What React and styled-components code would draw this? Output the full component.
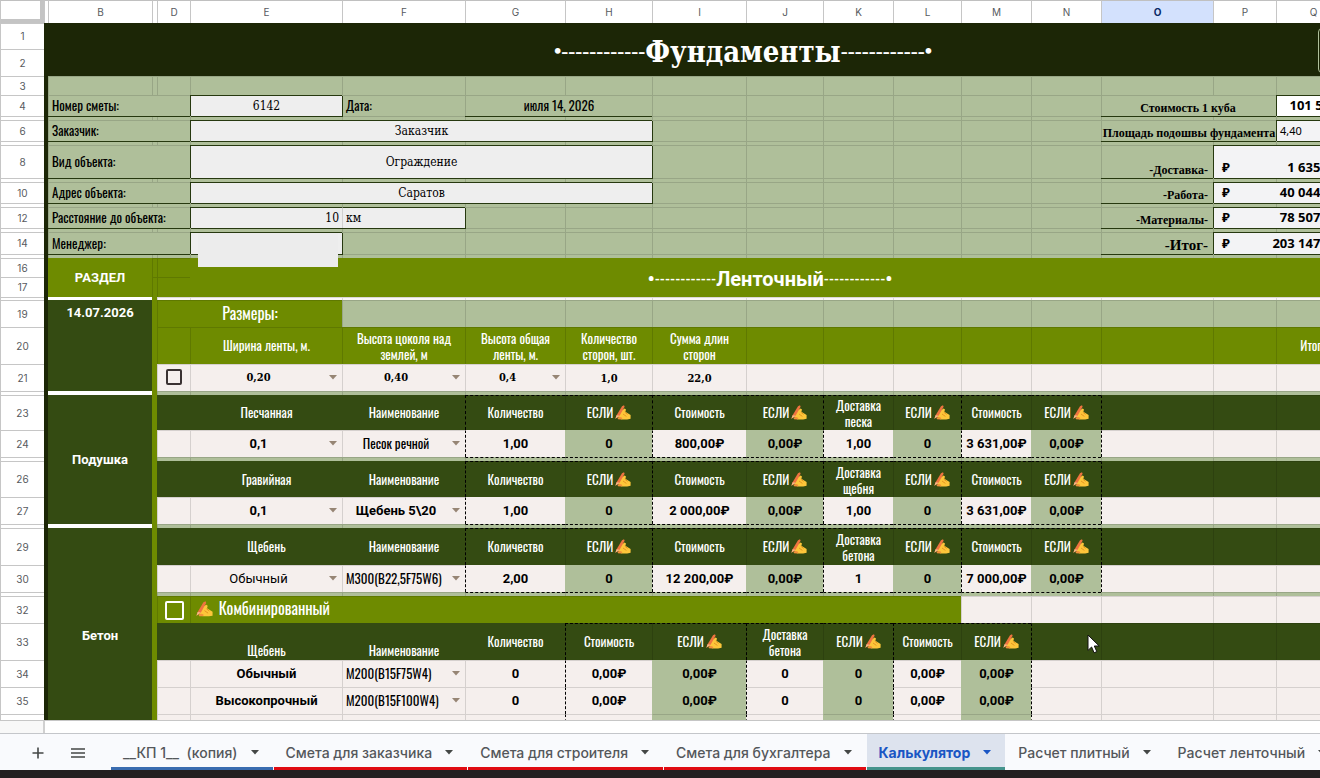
import React from 'react'
import styled, { createGlobalStyle, css } from 'styled-components'

const color = {
  night: '#1c2606',
  forest: '#344b12',
  olive: '#6e8b00',
  sage: '#afbf9a',
  paper: '#f5efed',
  field: '#eeeeee',
  line: 'rgba(0, 0, 0, 0.13)',
}

const narrow = '"Oswald", "Liberation Sans Narrow", "Arial Narrow", "Open Sans Condensed", "Liberation Sans", sans-serif'
const slab = '"DejaVu Serif Condensed", "DejaVu Serif", serif'

const GlobalStyle = createGlobalStyle`
  * {
    box-sizing: border-box;
  }
  body {
    margin: 0;
    overflow: hidden;
    font-family: Roboto, sans-serif;
  }
  button, input, select {
    font: inherit;
    color: inherit;
    margin: 0;
  }
`

const Page = styled.div`
  display: flex;
  flex-direction: column;
  height: 100vh;
  background: #fff;
`

const Viewport = styled.main`
  flex: 1;
  min-height: 0;
  overflow: hidden;
`

const Sheet = styled.table`
  table-layout: fixed;
  width: 100%;
  border-collapse: separate;
  border-spacing: 0;
  font-size: 13px;
  line-height: 17px;
`

const HeadCell = styled.th`
  height: 23px;
  padding: 0 0 1px;
  border-top: 1px solid #c0c0c0;
  border-left: 1px solid #c6c6c6;
  background: ${p => (p.$active ? '#d3e1fd' : '#fff')};
  color: ${p => (p.$active ? '#0b2a66' : '#575a5e')};
  font: ${p => (p.$active ? 700 : 400)} 10px Inter, sans-serif;
  text-align: center;
`

const Corner = styled(HeadCell)`
  border-right: 4px solid #c4c4c4;
  border-bottom: 4px solid #c4c4c4;
`

const RowHead = styled.th`
  padding: 0 0 1px;
  border-top: 1px solid #c6c6c6;
  border-left: 1px solid #c6c6c6;
  background: #fff;
  color: #575a5e;
  font: 400 10px Inter, sans-serif;
  text-align: center;
`

const borders = {
  dash: '1px dashed #000',
  clear: '1px solid transparent',
}

// headings and form fields sit a little lower than plain values
const lowered = ['forest', 'olive', 'field', 'night']

const Cell = styled.td`
  padding: 0 ${p => p.$pad ?? 3}px ${p => (lowered.includes(p.$bg) ? 0 : 2)}px;
  background: ${p => color[p.$bg] || p.$bg || color.sage};
  border-top: ${p => borders[p.$top] || `1px solid ${color.line}`};
  border-left: ${p => borders[p.$left] || `1px solid ${color.line}`};
  text-align: ${p => p.$align || 'center'};
  vertical-align: ${p => p.$valign || 'middle'};
  white-space: nowrap;
  ${p => p.$under && css`
    position: relative;
    z-index: 1;
    box-shadow: 0 1px 0 #26380f;
  `}
  ${p => p.$box && css`
    position: relative;
    z-index: 1;
    border-top-color: #26380f;
    border-left-color: ${p.$joined ? '#d0d0d0' : '#26380f'};
    box-shadow: 1px 1px 0 #26380f;
  `}
`

const Solid = styled(Cell)`
  border-top-color: transparent;
  border-left-color: ${p => (p.$left ? '' : 'transparent')};
`

const Title = styled(Cell)`
  position: relative;
  padding-top: 4px;
  border: 0;
  color: #fff;
  font: 700 29px ${slab};
`

const TitleButton = styled.button`
  position: absolute;
  top: 5px;
  right: 0;
  width: 120px;
  height: 45px;
  border: 1px solid ${color.sage};
  border-radius: 4px;
  background: transparent;
`

const SectionTitle = styled(Cell)`
  border: 0;
  padding-top: 2px;
  color: #fff;
  font: 700 20px Roboto, sans-serif;
`

const Dashes = styled.span`
  font: 700 ${p => (p.$large ? '21px "Liberation Serif", serif' : '13px Roboto, sans-serif')};
  line-height: 0;
  vertical-align: ${p => (p.$large ? 4 : 2)}px;
`

const Side = styled(Cell)`
  border: 0;
  color: #fff;
  font-size: 13px;
  font-weight: 700;
  line-height: 26px;
`

const Label = styled.label`
  display: block;
  font: 400 13px ${narrow};
  line-height: 16px;
`

const Field = styled.input`
  display: block;
  width: 100%;
  height: 18px;
  padding: 0;
  border: 0;
  background: transparent;
  font: 400 12px ${slab};
  text-align: ${p => p.$align || 'center'};
`

const Redacted = styled.div`
  position: absolute;
  top: 0;
  left: 7px;
  width: 140px;
  height: 34px;
  background: #ececec;
`

const Caption = styled(Cell)`
  padding-bottom: 0;
  padding-right: ${p => p.$pad ?? 5}px;
  font: 700 13px "Liberation Serif", serif;
  font-size: ${p => (p.$large ? 15 : 12)}px;
  text-align: ${p => p.$align || 'right'};
  vertical-align: bottom;
`

const Money = styled.div`
  display: flex;
  justify-content: ${p => (p.$center ? 'center' : 'space-between')};
  padding: ${p => (p.$center ? 0 : '0 11px 0 8px')};
  font: 700 13px "Noto Sans", sans-serif;
  line-height: 17px;
`

const Area = styled.span`
  font: 400 11px "Noto Sans", sans-serif;
`

const Head = styled.span`
  display: inline-flex;
  align-items: center;
  gap: 2px;
  color: #fff;
  font: 400 ${p => (p.$large ? 16 : 13)}px ${narrow};
  line-height: 16px;
  white-space: pre-line;
`

const Value = styled.span`
  font-weight: 700;
`

const SlabValue = styled.span`
  font: 700 11px ${slab};
`

const Picker = styled.span`
  display: grid;
  align-items: center;

  & > * {
    grid-area: 1 / 1;
  }
`

const fonts = {
  bold: css`font: 700 13px Roboto, sans-serif;`,
  plain: css`font: 400 13px Roboto, sans-serif;`,
  slab: css`font: 700 11px ${slab};`,
  narrow: css`font: 400 13px ${narrow};`,
}

const Select = styled.select`
  width: 100%;
  height: 20px;
  padding: 0 ${p => (p.$start ? 0 : 16)}px 0 0;
  border: 0;
  appearance: none;
  background: transparent;
  color: #000;
  ${p => fonts[p.$font]}
  text-align: ${p => (p.$start ? 'left' : 'center')};
  text-align-last: ${p => (p.$start ? 'left' : 'center')};
`

const Arrow = styled.svg`
  justify-self: end;
  margin-right: 2px;
  pointer-events: none;
`

const Tick = styled.input`
  display: block;
  width: ${p => (p.$light ? 19 : 16)}px;
  height: ${p => (p.$light ? 19 : 16)}px;
  margin: 0 auto;
  border: 2px solid ${p => (p.$light ? '#fff' : '#3a3232')};
  border-radius: 2px;
  appearance: none;
  background: transparent;
`

const ScrollStrip = styled.div`
  display: flex;
  height: 13px;
  border-top: 1px solid #c6c6c6;
`

const ScrollCorner = styled.div`
  width: 45px;
  border-right: 2px solid #d0d0d0;
  background: #f8f8f8;
`

const TabBar = styled.nav`
  display: flex;
  height: 37px;
  padding-left: 18px;
  border-top: 1px solid #c4c6ca;
  background: #f9fafd;
  overflow: hidden;
`

const IconButton = styled.button`
  display: flex;
  flex: none;
  align-items: center;
  justify-content: center;
  width: 40px;
  padding: 2px 0 0;
  border: 0;
  background: transparent;
  color: #444746;
`

const Tabs = styled.div`
  display: flex;
  gap: 1px;
  margin-left: 13px;
`

const Tab = styled.button`
  display: flex;
  flex: none;
  align-items: center;
  gap: 13px;
  padding: 4px 12px 0;
  border: 0;
  border-bottom: 3px solid ${p => p.$stripe || 'transparent'};
  background: ${p => (p.$active ? '#dde3ee' : 'transparent')};
  color: ${p => (p.$active ? '#1a56c4' : '#54575b')};
  font: ${p => (p.$active ? 700 : 500)} 14px Inter, sans-serif;
  white-space: pre;
`

const Taskbar = styled.div`
  height: 8px;
  background: #242021;
`

const PointerCell = styled(Solid)`
  position: relative;
`

const Pointer = styled.svg`
  position: absolute;
  top: 10px;
  left: 55px;
`

const columns = [
  ['', 44], ['', 4], ['B', 104], ['', 5], ['D', 33], ['E', 152], ['F', 123], ['G', 100],
  ['H', 87], ['I', 94], ['J', 77], ['K', 70], ['L', 68], ['M', 70], ['N', 70], ['O', 112],
  ['P', 63], ['Q', 74], ['R', 88],
]

const tabs = [
  { name: '__КП 1__  (копия)', stripe: '#3a6cb0' },
  { name: 'Смета для заказчика', stripe: '#e00b12' },
  { name: 'Смета для строителя', stripe: '#e00b12' },
  { name: 'Смета для бухгалтера', stripe: '#e00b12' },
  { name: 'Калькулятор', stripe: '#45938c', active: true },
  { name: 'Расчет плитный' },
  { name: 'Расчет ленточный' },
]

function Caret({ fill }) {
  return (
    <Arrow width="8" height="5" viewBox="0 0 8 5" aria-hidden="true">
      <path d="M0 0h8L4 4.5z" fill={fill || '#968574'} />
    </Arrow>
  )
}

function Hand({ size = 16 }) {
  return (
    <svg width={size} height={size} viewBox="0 0 16 16" aria-hidden="true">
      <path d="M3 12.5 4.5 9 7 6.2 9.6 4.4 11 5.4l-.6 2.4L15.6 11v3.8l-3.4.6H6.4z" fill="#fdc63a" />
      <path d="M9.8 8.2 12.6 10.4M8 10l3.4 2.4" stroke="#e08a1c" strokeWidth=".8" fill="none" />
      <path d="M.4 14.8 1.6 11.2 7 2.2 9 1.2l.6 1.6L4.6 11.8z" fill="#ef7440" />
      <path d="M.4 14.8 1.6 11.2l3 .6z" fill="#f6b98a" />
      <path d="M2.4 13.6c2-1 3.8-.6 5 .6l-1 1.2-3.4-.2z" fill="#f2913a" />
    </svg>
  )
}

function If() {
  return <Head>ЕСЛИ<Hand /></Head>
}

function Choice({ label, value, font = 'bold', start }) {
  return (
    <Picker>
      <Select aria-label={label} $font={font} $start={start} defaultValue={value}>
        <option>{value}</option>
      </Select>
      <Caret />
    </Picker>
  )
}

function Row({ n, h, children }) {
  return (
    <tr style={{ height: h }}>
      <RowHead scope="row">{n}</RowHead>
      <Solid $bg="night" $pad={0} />
      {children}
    </tr>
  )
}

function Blank({ count = 1, ...rest }) {
  return Array.from({ length: count }, (_, i) => <Cell key={i} $pad={0} {...rest} />)
}

// thin row between two blocks of the estimate
function Gap({ side, dashed, bg = 'sage', h = 4 }) {
  return (
    <Row h={h}>
      {side && <Side $bg="#fff" $pad={0} />}
      <Solid $bg="olive" $pad={0} />
      <Blank count={3} $bg={bg} />
      <Blank count={8} $bg={bg} $top={dashed && 'dash'} />
      <Blank count={4} $bg={bg} />
    </Row>
  )
}

function HeaderGap() {
  return <Row h={4}><Blank count={17} /></Row>
}

function SummaryRow({ n, h, label, total, name, large, children }) {
  return (
    <Row n={n} h={h}>
      <Cell colSpan={3} $align="left" $under><Label htmlFor={`f${n}`}>{label}</Label></Cell>
      {children}
      <Caption $under $large={large}>{name}</Caption>
      <Cell colSpan={2} $pad={0} $box $bg="#f3f3f5" $valign="bottom"><Money><span>₽</span><span>{total}</span></Money></Cell>
      <Blank />
    </Row>
  )
}

function BlockHead({ n, h, title, delivery, side }) {
  const items = ['Количество', null, 'Стоимость', null, `Доставка\n${delivery}`, null, 'Стоимость', null]
  return (
    <Row n={n} h={h}>
      {side}
      <Solid $bg="olive" $pad={0} />
      <Solid $bg="forest" />
      <Solid $bg="forest"><Head>{title}</Head></Solid>
      <Solid $bg="forest"><Head>Наименование</Head></Solid>
      {items.map((item, i) => (
        <Cell key={i} $bg="forest" $top="dash" $left={i % 2 ? null : 'dash'}>
          {item ? <Head>{item}</Head> : <If />}
        </Cell>
      ))}
      <Solid $bg="forest" $left="dash" />
      <Blank count={3} $bg="forest" />
    </Row>
  )
}

function BlockValues({ n, size, sizeFont, name, nameFont, nameStart, values }) {
  return (
    <Row n={n} h={27}>
      <Solid $bg="olive" $pad={0} />
      <Cell $bg="paper" />
      <Cell $bg="paper"><Choice label="Толщина" value={size} font={sizeFont} /></Cell>
      <Cell $bg="paper"><Choice label="Наименование" value={name} font={nameFont} start={nameStart} /></Cell>
      {values.map((v, i) => (
        <Cell key={i} $pad={0} $bg={i % 2 ? 'sage' : 'paper'} $top="clear" $left={i % 2 ? 'clear' : 'dash'}>
          <Value>{v}</Value>
        </Cell>
      ))}
      <Cell $bg="paper" $left="dash" />
      <Blank count={3} $bg="paper" />
    </Row>
  )
}

function MixedValues({ n, kind, mark }) {
  const values = ['0,00₽', '0,00₽', '0', '0', '0,00₽', '0,00₽']
  return (
    <Row n={n} h={27}>
      <Solid $bg="olive" $pad={0} />
      <Cell $bg="paper" />
      <Cell $bg="paper"><Value>{kind}</Value></Cell>
      <Cell $bg="paper"><Choice label="Наименование" value={mark} font="narrow" start /></Cell>
      <Cell $bg="paper"><Value>0</Value></Cell>
      {values.map((v, i) => (
        <Cell key={i} $bg={i % 2 ? 'sage' : 'paper'} $top={i % 2 ? 'clear' : null} $left={i % 2 ? 'clear' : 'dash'}>
          <Value>{v}</Value>
        </Cell>
      ))}
      <Cell $bg="paper" $left="dash" />
      <Blank count={4} $bg="paper" />
    </Row>
  )
}

function EstimateHeader() {
  return (
    <>
      <Row n={1} h={26}>
        <Title colSpan={17} rowSpan={2} $bg="night">
          <Dashes $large>•------------</Dashes>Фундаменты<Dashes $large>------------•</Dashes>
          <TitleButton type="button" aria-label="Обновить" />
        </Title>
      </Row>
      <Row n={2} h={27} />
      <Row n={3} h={19}><Blank count={17} /></Row>
      <Row n={4} h={21}>
        <Cell colSpan={3} $align="left" $under><Label htmlFor="f4">Номер сметы:</Label></Cell>
        <Cell $box $bg="field"><Field id="f4" defaultValue="6142" /></Cell>
        <Cell $align="left"><Label as="span">Дата:</Label></Cell>
        <Cell colSpan={2} $under><Label as="span">июля 14, 2026</Label></Cell>
        <Blank count={6} />
        <Caption colSpan={2} $align="center" $under>Стоимость 1 куба</Caption>
        <Cell $box $bg="#fff"><Money $center>101 500</Money></Cell>
        <Blank />
      </Row>
      <HeaderGap />
      <Row n={6} h={21}>
        <Cell colSpan={3} $align="left" $under><Label htmlFor="f6">Заказчик:</Label></Cell>
        <Cell colSpan={4} $box $bg="field"><Field id="f6" defaultValue="Заказчик" /></Cell>
        <Blank count={6} />
        <Caption colSpan={2} $align="center" $pad={0} $under>Площадь подошвы фундамента</Caption>
        <Cell $box $bg="#f3f3f5" $align="left"><Area>4,40</Area></Cell>
        <Blank />
      </Row>
      <HeaderGap />
      <SummaryRow n={8} h={33} label="Вид объекта:" name="-Доставка-" total="1 635,00">
        <Cell colSpan={4} $box $bg="field"><Field id="f8" defaultValue="Ограждение" /></Cell>
        <Blank count={6} />
      </SummaryRow>
      <HeaderGap />
      <SummaryRow n={10} h={21} label="Адрес объекта:" name="-Работа-" total="40 044,00">
        <Cell colSpan={4} $box $bg="field"><Field id="f10" defaultValue="Саратов" /></Cell>
        <Blank count={6} />
      </SummaryRow>
      <HeaderGap />
      <SummaryRow n={12} h={21} label="Расстояние до объекта:" name="-Материалы-" total="78 507,00">
        <Cell $box $bg="field"><Field id="f12" defaultValue="10" $align="right" /></Cell>
        <Cell $box $joined $bg="field"><Field aria-label="Единица" defaultValue="км" $align="left" /></Cell>
        <Blank count={8} />
      </SummaryRow>
      <HeaderGap />
      <SummaryRow n={14} h={22} label="Менеджер:" name="-Итог-" total="203 147,00" large>
        <Cell $box $bg="field"><Field id="f14" /><Redacted /></Cell>
        <Blank count={9} />
      </SummaryRow>
      <HeaderGap />
    </>
  )
}

function StripSection() {
  return (
    <>
      <Row n={16} h={19}>
        <Side rowSpan={2} $bg="olive">РАЗДЕЛ</Side>
        <Blank count={2} $bg="olive" />
        <SectionTitle colSpan={13} rowSpan={2} $bg="olive">
          •<Dashes>------------</Dashes>Ленточный<Dashes>------------</Dashes>•
        </SectionTitle>
        <Blank $bg="olive" />
      </Row>
      <Row n={17} h={20}>
        <Blank count={2} $bg="olive" />
        <Blank $bg="olive" />
      </Row>
      <Gap side bg="#fbf7f6" h={3} />
      <Row n={19} h={27}>
        <Side rowSpan={3} $bg="forest" $valign="top">14.07.2026</Side>
        <Solid $bg="olive" $pad={0} />
        <Cell colSpan={2} $bg="olive"><Head $large>Размеры:</Head></Cell>
        <Blank count={13} />
      </Row>
      <Row n={20} h={37}>
        <Solid $bg="olive" $pad={0} />
        <Cell $bg="olive" />
        <Cell $bg="olive"><Head>Ширина ленты, м.</Head></Cell>
        <Cell $bg="olive"><Head>{'Высота цоколя над\nземлей, м'}</Head></Cell>
        <Cell $bg="olive"><Head>{'Высота общая\nленты, м.'}</Head></Cell>
        <Cell $bg="olive"><Head>{'Количество\nсторон, шт.'}</Head></Cell>
        <Cell $bg="olive"><Head>{'Сумма длин\nсторон'}</Head></Cell>
        <Blank count={7} $bg="olive" />
        <Cell $bg="olive"><Head>Итого</Head></Cell>
        <Blank $bg="olive" />
      </Row>
      <Row n={21} h={27}>
        <Solid $bg="olive" $pad={0} />
        <Cell $bg="paper"><Tick type="checkbox" aria-label="Выбрать размеры" /></Cell>
        <Cell $bg="paper"><Choice label="Ширина ленты" value="0,20" font="slab" /></Cell>
        <Cell $bg="paper"><Choice label="Высота цоколя" value="0,40" font="slab" /></Cell>
        <Cell $bg="paper"><Choice label="Высота общая" value="0,4" font="slab" /></Cell>
        <Cell $bg="paper"><SlabValue>1,0</SlabValue></Cell>
        <Cell $bg="paper"><SlabValue>22,0</SlabValue></Cell>
        <Blank count={9} $bg="paper" />
      </Row>
      <Gap side />
    </>
  )
}

function Cushion() {
  return (
    <>
      <BlockHead
        n={23}
        h={35}
        title="Песчанная"
        delivery="песка"
        side={<Side rowSpan={5} $bg="forest">Подушка</Side>}
      />
      <BlockValues
        n={24}
        size="0,1"
        name="Песок речной"
        nameFont="narrow"
        values={['1,00', '0', '800,00₽', '0,00₽', '1,00', '0', '3 631,00₽', '0,00₽']}
      />
      <Gap dashed />
      <BlockHead n={26} h={36} title="Гравийная" delivery="щебня" />
      <BlockValues
        n={27}
        size="0,1"
        name="Щебень 5\20"
        values={['1,00', '0', '2 000,00₽', '0,00₽', '1,00', '0', '3 631,00₽', '0,00₽']}
      />
      <Gap side dashed />
    </>
  )
}

function Concrete() {
  return (
    <>
      <BlockHead
        n={29}
        h={37}
        title="Щебень"
        delivery="бетона"
        side={<Side rowSpan={8} $bg="forest">Бетон</Side>}
      />
      <BlockValues
        n={30}
        size="Обычный"
        sizeFont="plain"
        name="М300(В22,5F75W6)"
        nameFont="narrow"
        nameStart
        values={['2,00', '0', '12 200,00₽', '0,00₽', '1', '0', '7 000,00₽', '0,00₽']}
      />
      <Gap dashed />
      <Row n={32} h={27}>
        <Solid $bg="olive" $pad={0} />
        <Cell $bg="olive"><Tick id="mixed" type="checkbox" $light /></Cell>
        <Cell colSpan={8} $bg="olive" $align="left" $pad={5}>
          <Head as="label" htmlFor="mixed" $large><Hand size={17} />&nbsp;Комбинированный</Head>
        </Cell>
        <Blank count={6} $bg="paper" />
      </Row>
      <Row n={33} h={37}>
        <Solid $bg="olive" $pad={0} />
        <Solid $bg="forest" />
        <Solid $bg="forest" $valign="bottom"><Head>Щебень</Head></Solid>
        <Solid $bg="forest" $valign="bottom"><Head>Наименование</Head></Solid>
        <Solid $bg="forest"><Head>Количество</Head></Solid>
        <Cell $bg="forest" $top="dash" $left="dash"><Head>Стоимость</Head></Cell>
        <Cell $bg="forest" $top="dash"><If /></Cell>
        <Cell $bg="forest" $top="dash" $left="dash"><Head>{'Доставка\nбетона'}</Head></Cell>
        <Cell $bg="forest" $top="dash"><If /></Cell>
        <Cell $bg="forest" $top="dash" $left="dash"><Head>Стоимость</Head></Cell>
        <Cell $bg="forest" $top="dash"><If /></Cell>
        <PointerCell $bg="forest" $left="dash">
          <Pointer width="13" height="20" viewBox="0 0 13 20" aria-hidden="true">
            <path d="M1 1v15.4l3.6-3.4 2.5 5.8 2.7-1.2-2.5-5.6h4.9z" fill="#fff" stroke="#111" />
          </Pointer>
        </PointerCell>
        <Blank count={4} $bg="forest" />
      </Row>
      <MixedValues n={34} kind="Обычный" mark="М200(B15F75W4)" />
      <MixedValues n={35} kind="Высокопрочный" mark="М200(B15F100W4)" />
      <Row h={30}>
        <Solid $bg="olive" $pad={0} />
        <Blank count={4} $bg="paper" />
        <Cell $bg="paper" $left="dash" />
        <Cell $left="clear" />
        <Cell $bg="paper" $left="dash" />
        <Cell $left="clear" />
        <Cell $bg="paper" $left="dash" />
        <Cell $left="clear" />
        <Cell $bg="paper" $left="dash" />
        <Blank count={4} $bg="paper" />
      </Row>
    </>
  )
}

export default function App() {
  return (
    <Page>
      <GlobalStyle />
      <Viewport>
        <Sheet>
          <colgroup>
            {columns.map(([, width], i) => <col key={i} style={{ width }} />)}
          </colgroup>
          <thead>
            <tr>
              <Corner />
              {columns.slice(1).map(([name], i) => (
                <HeadCell key={i} scope="col" $active={name === 'O'}>{name}</HeadCell>
              ))}
            </tr>
          </thead>
          <tbody>
            <EstimateHeader />
            <StripSection />
            <Cushion />
            <Concrete />
          </tbody>
        </Sheet>
      </Viewport>
      <ScrollStrip><ScrollCorner /></ScrollStrip>
      <TabBar>
        <IconButton type="button" aria-label="Добавить лист">
          <svg width="12" height="12" viewBox="0 0 12 12"><path d="M6 .5v11M.5 6h11" stroke="currentColor" strokeWidth="1.6" /></svg>
        </IconButton>
        <IconButton type="button" aria-label="Все листы">
          <svg width="14" height="10" viewBox="0 0 14 10"><path d="M0 1h14M0 5h14M0 9h14" stroke="currentColor" strokeWidth="1.6" /></svg>
        </IconButton>
        <Tabs>
          {tabs.map(tab => (
            <Tab key={tab.name} type="button" $stripe={tab.stripe} $active={tab.active}>
              {tab.name}
              <Caret fill={tab.active ? '#1a56c4' : '#444746'} />
            </Tab>
          ))}
        </Tabs>
      </TabBar>
      <Taskbar />
    </Page>
  )
}
